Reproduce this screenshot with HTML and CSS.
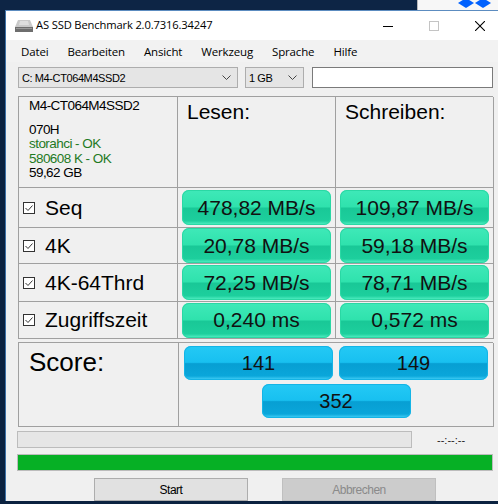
FILE: index.html
```html
<!DOCTYPE HTML>
<html lang="de">
<head>
<meta name="viewport" content="width=device-width, initial-scale=1">
<title>AS SSD Benchmark</title>
<link rel="stylesheet" href="styles.css">
</head>
<body>

<div class="desk">
  <div class="desk-left"></div>
  <div class="desk-right">
    <svg class="dropbox" width="34" height="9" viewBox="0 0 34 9">
      <polygon points="0,3 8,-2 16,3 8,8" fill="#0061fe"/>
      <polygon points="17,3 25,-2 33,3 25,8" fill="#0061fe"/>
    </svg>
  </div>
</div>

<div class="window">
  <div class="titlebar">
    <svg class="app-icon" width="20" height="14" viewBox="0 0 20 14">
      <polygon points="4,1 16,1 19,8 1,8" fill="#c9c9c9"/>
      <polygon points="6,2 14,2 15,6 5,6" fill="#dedede"/>
      <rect x="1" y="8" width="18" height="5" fill="#6e6e6e"/>
      <rect x="2" y="9" width="16" height="1" fill="#9a9a9a"/>
    </svg>
    <span class="title">AS SSD Benchmark 2.0.7316.34247</span>
    <div class="controls">
      <span class="ctl">
        <svg width="10" height="10" viewBox="0 0 10 10"><line x1="0" y1="5.5" x2="10" y2="5.5" stroke="#000"/></svg>
      </span>
      <span class="ctl">
        <svg width="10" height="10" viewBox="0 0 10 10"><rect x="0.5" y="0.5" width="9" height="9" fill="none" stroke="#c4c4c4"/></svg>
      </span>
      <span class="ctl">
        <svg width="10" height="10" viewBox="0 0 10 10"><path d="M0 0 L10 10 M10 0 L0 10" stroke="#000" stroke-width="1.1"/></svg>
      </span>
    </div>
  </div>

  <div class="menubar">
    <span>Datei</span>
    <span>Bearbeiten</span>
    <span>Ansicht</span>
    <span>Werkzeug</span>
    <span>Sprache</span>
    <span>Hilfe</span>
  </div>

  <div class="content">
    <div class="toolbar">
      <div class="combo drive">
        <span>C: M4-CT064M4SSD2</span>
        <svg width="9" height="5" viewBox="0 0 9 5"><path d="M0.5 0.5 L4.5 4.5 L8.5 0.5" fill="none" stroke="#444"/></svg>
      </div>
      <div class="combo size">
        <span>1 GB</span>
        <svg width="9" height="5" viewBox="0 0 9 5"><path d="M0.5 0.5 L4.5 4.5 L8.5 0.5" fill="none" stroke="#444"/></svg>
      </div>
      <div class="textbox"></div>
    </div>

    <div class="results">
      <div class="cell info">
        <div class="drive-name">M4-CT064M4SSD2</div>
        <div>070H</div>
        <div class="ok">storahci - OK</div>
        <div class="ok">580608 K - OK</div>
        <div>59,62 GB</div>
      </div>
      <div class="cell head">Lesen:</div>
      <div class="cell head">Schreiben:</div>

      <div class="cell label"><svg class="check" width="12" height="12" viewBox="0 0 12 12"><rect x="0.5" y="0.5" width="11" height="11" fill="#fff" stroke="#333"/><path d="M2.5 6 L5 8.5 L9.5 3.5" fill="none" stroke="#333"/></svg>Seq</div>
      <div class="cell val"><div class="pill green">478,82 MB/s</div></div>
      <div class="cell val"><div class="pill green">109,87 MB/s</div></div>

      <div class="cell label"><svg class="check" width="12" height="12" viewBox="0 0 12 12"><rect x="0.5" y="0.5" width="11" height="11" fill="#fff" stroke="#333"/><path d="M2.5 6 L5 8.5 L9.5 3.5" fill="none" stroke="#333"/></svg>4K</div>
      <div class="cell val"><div class="pill green">20,78 MB/s</div></div>
      <div class="cell val"><div class="pill green">59,18 MB/s</div></div>

      <div class="cell label"><svg class="check" width="12" height="12" viewBox="0 0 12 12"><rect x="0.5" y="0.5" width="11" height="11" fill="#fff" stroke="#333"/><path d="M2.5 6 L5 8.5 L9.5 3.5" fill="none" stroke="#333"/></svg>4K-64Thrd</div>
      <div class="cell val"><div class="pill green">72,25 MB/s</div></div>
      <div class="cell val"><div class="pill green">78,71 MB/s</div></div>

      <div class="cell label"><svg class="check" width="12" height="12" viewBox="0 0 12 12"><rect x="0.5" y="0.5" width="11" height="11" fill="#fff" stroke="#333"/><path d="M2.5 6 L5 8.5 L9.5 3.5" fill="none" stroke="#333"/></svg>Zugriffszeit</div>
      <div class="cell val"><div class="pill green">0,240 ms</div></div>
      <div class="cell val"><div class="pill green">0,572 ms</div></div>
    </div>

    <div class="score">
      <div class="cell score-label">Score:</div>
      <div class="cell score-values">
        <div class="pill blue">141</div>
        <div class="pill blue">149</div>
        <div class="pill blue">352</div>
      </div>
    </div>

    <div class="progress-row">
      <div class="progress"></div>
      <span class="time">--:--:--</span>
    </div>
    <div class="bar"></div>

    <div class="buttons">
      <button class="btn">Start</button>
      <button class="btn" disabled>Abbrechen</button>
    </div>
  </div>
</div>

</body>
</html>
```

FILE: styles.css
```css
/* Desktop behind the window */
body {
  margin: 0;
  background: #0b2240;
  overflow: hidden;
  font-family: 'Liberation Sans', Arial, sans-serif;
  color: #000;
}

.desk {
  display: flex;
  height: 10px;
}

.desk-left {
  flex: 1;
  background: #0d2545;
}

.desk-right {
  width: 81px;
  background: #f7f7f7;
  border-left: 1px solid #b8b8b8;
  display: flex;
  align-items: flex-start;
  padding-left: 40px;
  box-sizing: border-box;
  overflow: hidden;
}

/* Window frame */
.window {
  margin-left: 5px;
  width: 498px;
  background: #f0f0f0;
  border-left: 1px solid #3d72a8;
  border-top: 1px solid #5c8cc0;
  box-sizing: border-box;
}

.titlebar {
  height: 29px;
  background: #ffffff;
  display: flex;
  align-items: center;
}

.app-icon {
  margin-left: 8px;
  margin-right: 2px;
}

.title {
  font-family: 'Open Sans', 'Noto Sans', sans-serif;
  font-size: 11.2px;
  letter-spacing: -0.15px;
  padding-bottom: 2px;
}

.controls {
  margin-left: auto;
  display: flex;
  height: 100%;
}

.ctl {
  width: 46px;
  display: flex;
  align-items: center;
  justify-content: center;
}

/* Menu bar */
.menubar {
  height: 22px;
  background: #f2f2f2;
  display: flex;
  align-items: center;
  gap: 19px;
  padding-left: 15px;
  font-family: 'Open Sans', 'Noto Sans', sans-serif;
  font-size: 11.5px;
  letter-spacing: -0.15px;
}

.content {
  padding: 5px 10px 0 12px;
}

/* Drive selection row */
.toolbar {
  display: flex;
  height: 21px;
  align-items: stretch;
}

.combo {
  background: #e5e5e5;
  border: 1px solid #adadad;
  box-sizing: border-box;
  display: flex;
  align-items: center;
  justify-content: space-between;
  padding: 0 6px 0 3px;
  font-size: 11px;
  letter-spacing: -0.4px;
}

.combo.drive {
  width: 220px;
}

.combo.size {
  width: 59px;
  margin-left: 7px;
}

.textbox {
  width: 181px;
  margin-left: 8px;
  background: #ffffff;
  border: 1px solid #7a7a7a;
  box-sizing: border-box;
}

/* Results table */
.results {
  margin-top: 8px;
  display: grid;
  grid-template-columns: 159px 158px 158px;
  grid-template-rows: 91px 40px 36px 38px 37px;
  border-top: 1px solid #a0a0a0;
  border-left: 1px solid #a0a0a0;
  width: 475px;
  box-sizing: border-box;
}

.cell {
  border-right: 1px solid #a0a0a0;
  border-bottom: 1px solid #a0a0a0;
  box-sizing: border-box;
}

.info {
  padding: 2px 0 0 10px;
  font-size: 13.5px;
  letter-spacing: -0.55px;
  line-height: 14.5px;
}

.info .drive-name {
  margin-bottom: 9px;
}

.ok {
  color: #1f7a1f;
}

.head {
  font-size: 21px;
  padding: 3px 0 0 9px;
}

.label {
  display: flex;
  align-items: center;
  font-size: 21px;
  padding-left: 4px;
}

.check {
  margin-right: 10px;
}

.val {
  display: flex;
  align-items: center;
  padding: 0 4px 0 4px;
}

.pill {
  flex: 1;
  height: 35px;
  border-radius: 7px;
  display: flex;
  align-items: center;
  justify-content: center;
  font-size: 21px;
  color: #111;
}

.green {
  background: linear-gradient(to bottom, #3fe9b8 0%, #2fe2ad 48%, #19c897 52%, #1dcf9d 88%, #58f3c8 100%);
  box-shadow: inset 0 0 0 1px #2ad8a4;
}

.blue {
  background: linear-gradient(to bottom, #24c9f5 0%, #18c0f0 48%, #079fd3 52%, #0aa6da 88%, #48d4fa 100%);
  box-shadow: inset 0 0 0 1px #14b4e6;
  flex: none;
  width: 149px;
  height: 34px;
  font-size: 20px;
}

/* Score table */
.score {
  margin-top: 3px;
  display: grid;
  grid-template-columns: 160px 315px;
  grid-template-rows: 84px;
  border-top: 1px solid #a0a0a0;
  border-left: 1px solid #a0a0a0;
  width: 475px;
  box-sizing: border-box;
}

.score-label {
  font-size: 26px;
  padding: 4px 0 0 10px;
}

.score-values {
  display: flex;
  flex-wrap: wrap;
  justify-content: center;
  align-content: flex-start;
  gap: 4px 6px;
  padding-top: 3px;
}

/* Progress area */
.progress-row {
  margin-top: 4px;
  display: flex;
  align-items: center;
  margin-left: -1px;
}

.progress {
  width: 395px;
  height: 17px;
  background: #e6e6e6;
  border: 1px solid #bcbcbc;
  box-sizing: border-box;
}

.time {
  margin-left: 25px;
  font-size: 11px;
  color: #222;
}

.bar {
  margin-top: 6px;
  margin-left: -1px;
  width: 476px;
  height: 17px;
  background: #06b025;
  border: 1px solid #bcbcbc;
  box-sizing: border-box;
}

.buttons {
  margin-top: 7px;
  display: flex;
  gap: 34px;
  padding-left: 76px;
}

.btn {
  width: 154px;
  height: 23px;
  background: #e1e1e1;
  border: 1px solid #adadad;
  font-family: 'Liberation Sans', Arial, sans-serif;
  font-size: 12px;
  letter-spacing: -0.5px;
  color: #000;
  padding: 0;
}

.btn:disabled {
  background: #cccccc;
  border-color: #bfbfbf;
  color: #8a8a8a;
}
```
